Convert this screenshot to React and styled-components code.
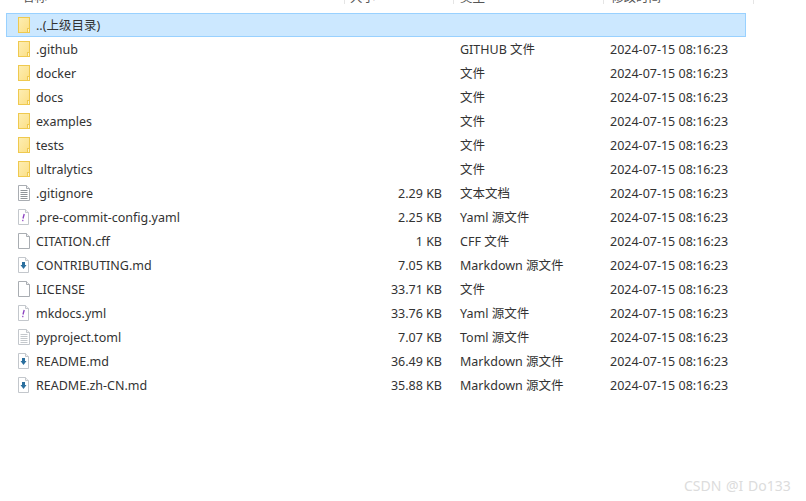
import React from "react";
import styled, { createGlobalStyle } from "styled-components";

const Global = createGlobalStyle`
  html, body { margin: 0; padding: 0; background: #fff; height: 100%; overflow: hidden; }
  body { font-family: "Noto Sans", "Noto Sans CJK SC", sans-serif; }
`;

const Page = styled.div`
  position: relative;
  width: 806px;
  height: 501px;
  overflow: hidden;
  padding-left: 6px;
  box-sizing: border-box;
`;

const Header = styled.div`
  display: grid;
  grid-template-columns: 339px 109px 150px 150px;
  height: 13px;
  overflow: hidden;
`;

const HeaderCell = styled.div`
  height: 4px;
  padding-left: ${(p) => p.$pad}px;
  border-right: 1px solid #e5e5e5;
  box-sizing: border-box;
  font-size: 12.5px;
  line-height: 14px;
  color: #555;
  overflow: hidden;
  display: flex;
  align-items: flex-end;
  white-space: nowrap;
  font-family: "Noto Sans CJK SC", sans-serif;
`;

const List = styled.div`
  display: flex;
  flex-direction: column;
  width: 740px;
`;

const Row = styled.div`
  display: grid;
  grid-template-columns: 338px 109px 150px 141px;
  height: 24px;
  box-sizing: border-box;
  align-items: center;
  font-size: 12.5px;
  line-height: 16px;
  color: #333;
  border: 1px solid ${(p) => (p.$selected ? "#99d1ff" : "transparent")};
  background: ${(p) => (p.$selected ? "#cce8ff" : "transparent")};
`;

const NameCell = styled.div`
  display: flex;
  align-items: center;
  gap: 4px;
  padding-left: 9px;
  white-space: nowrap;
`;

const IconBox = styled.span`
  display: inline-flex;
  width: 16px;
  height: 16px;
  flex: none;
`;

const NameText = styled.span`
  padding-top: 2px;
`;

const SizeCell = styled.div`
  text-align: right;
  padding: 2px 12px 0 0;
  min-height: 16px;
  white-space: nowrap;
`;

const TypeCell = styled.div`
  padding: 2px 0 0 6px;
  min-height: 16px;
  white-space: nowrap;
`;

const DateCell = styled.div`
  padding: 2px 0 0 6px;
  min-height: 16px;
  white-space: nowrap;
`;

const Watermark = styled.div`
  position: absolute;
  left: 684px;
  top: 476px;
  font-size: 14px;
  line-height: 19px;
  word-spacing: 1px;
  color: #dcdcdc;
  white-space: nowrap;
  font-family: "Noto Sans", sans-serif;
`;

const Folder = () => (
  <svg width="16" height="16" viewBox="0 0 16 16">
    <defs>
      <linearGradient id="fg" x1="0" y1="0" x2="1" y2="1">
        <stop offset="0" stopColor="#fdeeb4" />
        <stop offset="1" stopColor="#fcdf85" />
      </linearGradient>
    </defs>
    <rect x="2.5" y="0.5" width="11" height="15" fill="url(#fg)" stroke="#efc94f" />
    <rect x="11.500" y="11.500" width="2" height="4" fill="#fff4cc" stroke="#efc94f" />
  </svg>
);

const Sheet = ({ line = "#a9adb2", right = 13.5, children }) => (
  <svg width="16" height="16" viewBox="0 0 16 16">
    <path d={`M2.500.5h${right - 5.5}l3 3v12h-${right - 2.5}z`} fill="#fff" stroke={line} />
    <path d={`M${right - 3} .5v3h3`} fill="#f2f2f2" stroke={line} />
    {children}
  </svg>
);

const TextDoc = ({ tone, line }) => (
  <Sheet line={line}>
    <path d="M4.500 5.500h7M4.500 7.500h7M4.500 9.500h7M4.500 11.500h7M4.500 13.500h7" stroke={tone} fill="none" />
  </Sheet>
);

const Yaml = () => (
  <Sheet line="#c3c7cc" right={12.5}>
    <path d="M8.200 5 7 9.500" stroke="#8a3fc0" strokeWidth="1.300" fill="none" />
    <rect x="6.200" y="10.800" width="1.200" height="1.400" fill="#8a3fc0" />
  </Sheet>
);

const Markdown = () => (
  <Sheet line="#c3c7cc" right={12.5}>
    <path d="M6 5h3v3h1.500L7.500 12 4.500 8H6z" fill="#2b6f9e" />
  </Sheet>
);

const icons = {
  folder: <Folder />,
  text: <TextDoc tone="#8f9499" />,
  lightText: <TextDoc tone="#c4c8cc" line="#c3c7cc" />,
  yaml: <Yaml />,
  blank: <Sheet />,
  md: <Markdown />,
};

const D = "2024-07-15 08:16:23";
const rows = [
  { n: "..(上级目录)", i: "folder", s: "", t: "", d: "", selected: true },
  { n: ".github", i: "folder", s: "", t: "GITHUB 文件", d: D },
  { n: "docker", i: "folder", s: "", t: "文件", d: D },
  { n: "docs", i: "folder", s: "", t: "文件", d: D },
  { n: "examples", i: "folder", s: "", t: "文件", d: D },
  { n: "tests", i: "folder", s: "", t: "文件", d: D },
  { n: "ultralytics", i: "folder", s: "", t: "文件", d: D },
  { n: ".gitignore", i: "text", s: "2.29 KB", t: "文本文档", d: D },
  { n: ".pre-commit-config.yaml", i: "yaml", s: "2.25 KB", t: "Yaml 源文件", d: D },
  { n: "CITATION.cff", i: "blank", s: "1 KB", t: "CFF 文件", d: D },
  { n: "CONTRIBUTING.md", i: "md", s: "7.05 KB", t: "Markdown 源文件", d: D },
  { n: "LICENSE", i: "blank", s: "33.71 KB", t: "文件", d: D },
  { n: "mkdocs.yml", i: "yaml", s: "33.76 KB", t: "Yaml 源文件", d: D },
  { n: "pyproject.toml", i: "lightText", s: "7.07 KB", t: "Toml 源文件", d: D },
  { n: "README.md", i: "md", s: "36.49 KB", t: "Markdown 源文件", d: D },
  { n: "README.zh-CN.md", i: "md", s: "35.88 KB", t: "Markdown 源文件", d: D },
];

export default function App() {
  return (
    <Page>
      <Global />
      <Header>
        <HeaderCell $pad={16}>名称</HeaderCell>
        <HeaderCell $pad={5}>大小</HeaderCell>
        <HeaderCell $pad={6}>类型</HeaderCell>
        <HeaderCell $pad={7}>修改时间</HeaderCell>
      </Header>
      <List>
        {rows.map((r) => (
          <Row key={r.n} $selected={r.selected}>
            <NameCell>
              <IconBox>{icons[r.i]}</IconBox>
              <NameText>{r.n}</NameText>
            </NameCell>
            <SizeCell>{r.s}</SizeCell>
            <TypeCell>{r.t}</TypeCell>
            <DateCell>{r.d}</DateCell>
          </Row>
        ))}
      </List>
      <Watermark>CSDN @I Do133</Watermark>
    </Page>
  );
}
